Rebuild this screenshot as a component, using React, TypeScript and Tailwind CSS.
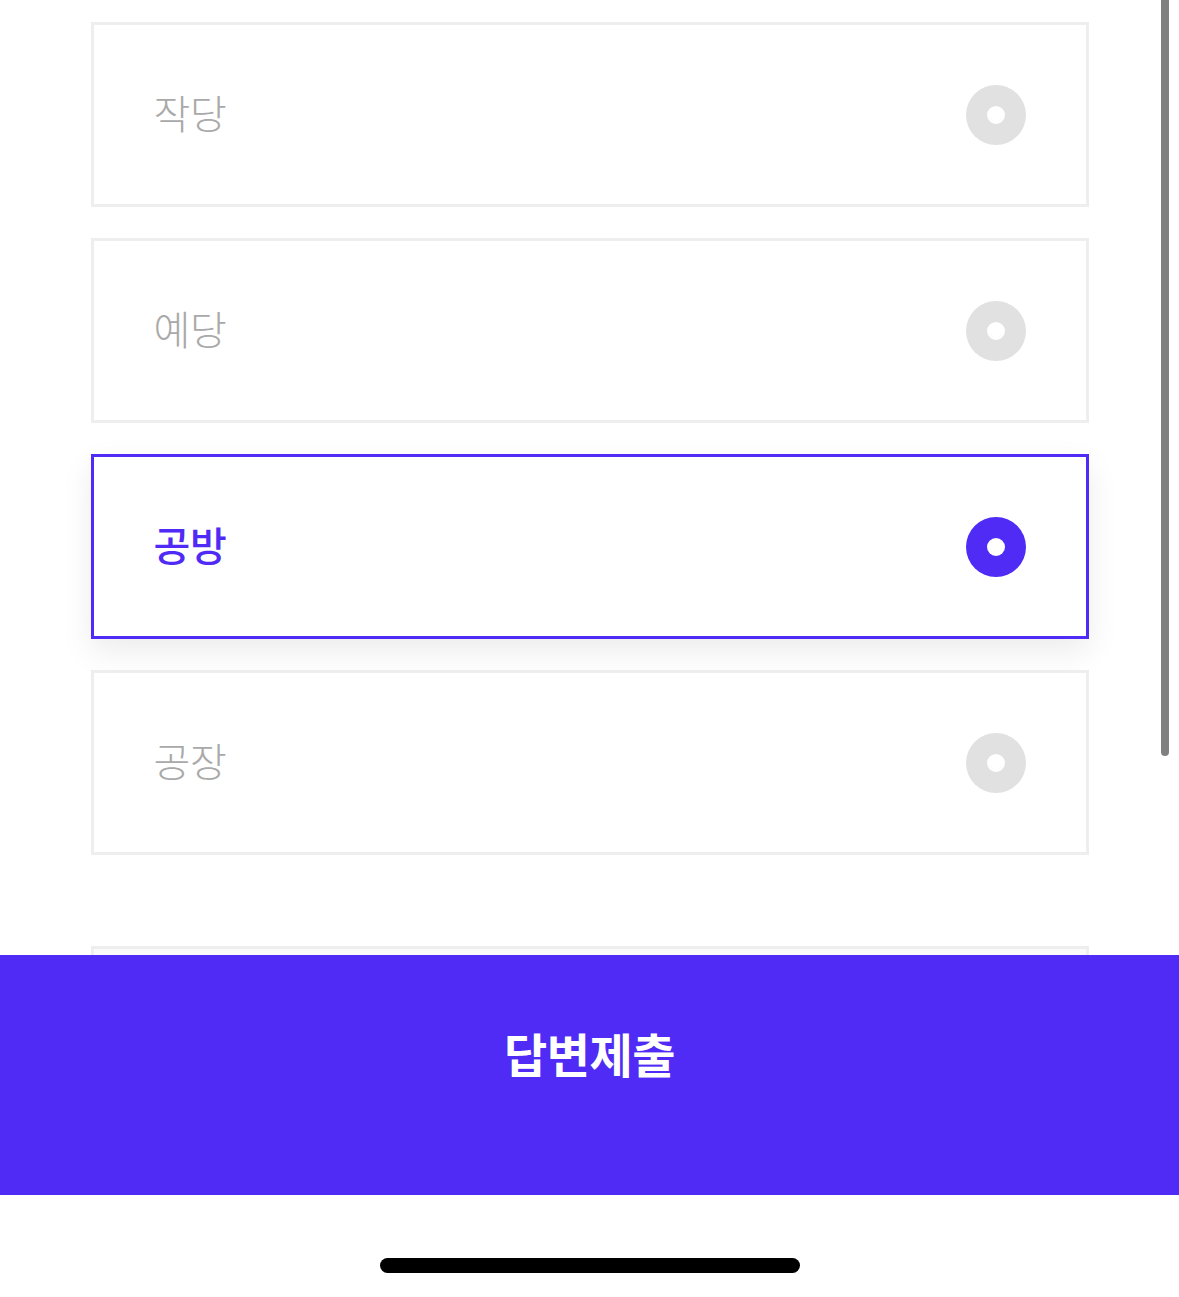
const options = ['작당', '예당', '공방', '공장']

function Radio({ active }: { active: boolean }) {
  return (
    <div
      className={`flex h-[60px] w-[60px] items-center justify-center rounded-full ${
        active ? 'bg-[#4f2bf5]' : 'bg-[#e1e1e1]'
      }`}
    >
      <div className="h-[18px] w-[18px] rounded-full bg-white" />
    </div>
  )
}

export default function App() {
  const selected = 2

  return (
    <div
      className="relative h-[1297px] w-full overflow-hidden bg-white"
      style={{ fontFamily: '"Noto Sans CJK KR", "Noto Sans", sans-serif' }}
    >
      <div className="mx-auto flex w-[998px] flex-col gap-[31px] pt-[22px]">
        {options.map((label, i) => {
          const active = i === selected
          return (
            <div
              key={label}
              className={`flex h-[185px] items-center justify-between border-[3px] bg-white px-[60px] ${
                active
                  ? 'border-[#4f2bf5] shadow-[0_12px_30px_rgba(0,0,0,0.08)]'
                  : 'border-[#eeeeee]'
              }`}
            >
              <span
                className={`-mt-[6px] text-[40px] leading-none tracking-[-0.3px] ${
                  active ? 'font-medium text-[#4f2bf5]' : 'font-light text-[#a9a9a9]'
                }`}
              >
                {label}
              </span>
              <Radio active={active} />
            </div>
          )
        })}

        {/* next question, cut off by the bottom bar */}
        <div className="mt-[60px] h-[185px] border-[3px] border-[#eeeeee] bg-[#fafafa]" />
      </div>

      {/* scroll indicator */}
      <div className="absolute right-[10px] top-0 h-[756px] w-[8px] rounded-b-full bg-[#808080]" />

      {/* fixed bottom bar */}
      <div className="absolute bottom-0 left-0 right-0 flex flex-col bg-white">
        <button
          type="button"
          className="flex h-[240px] w-full items-center justify-center bg-[#4f2bf5] pb-[44px] text-[47px] font-bold tracking-[-0.5px] text-white"
        >
          답변제출
        </button>
        <div className="flex h-[102px] items-start justify-center pt-[63px]">
          <div className="h-[15px] w-[420px] rounded-full bg-black" />
        </div>
      </div>
    </div>
  )
}
